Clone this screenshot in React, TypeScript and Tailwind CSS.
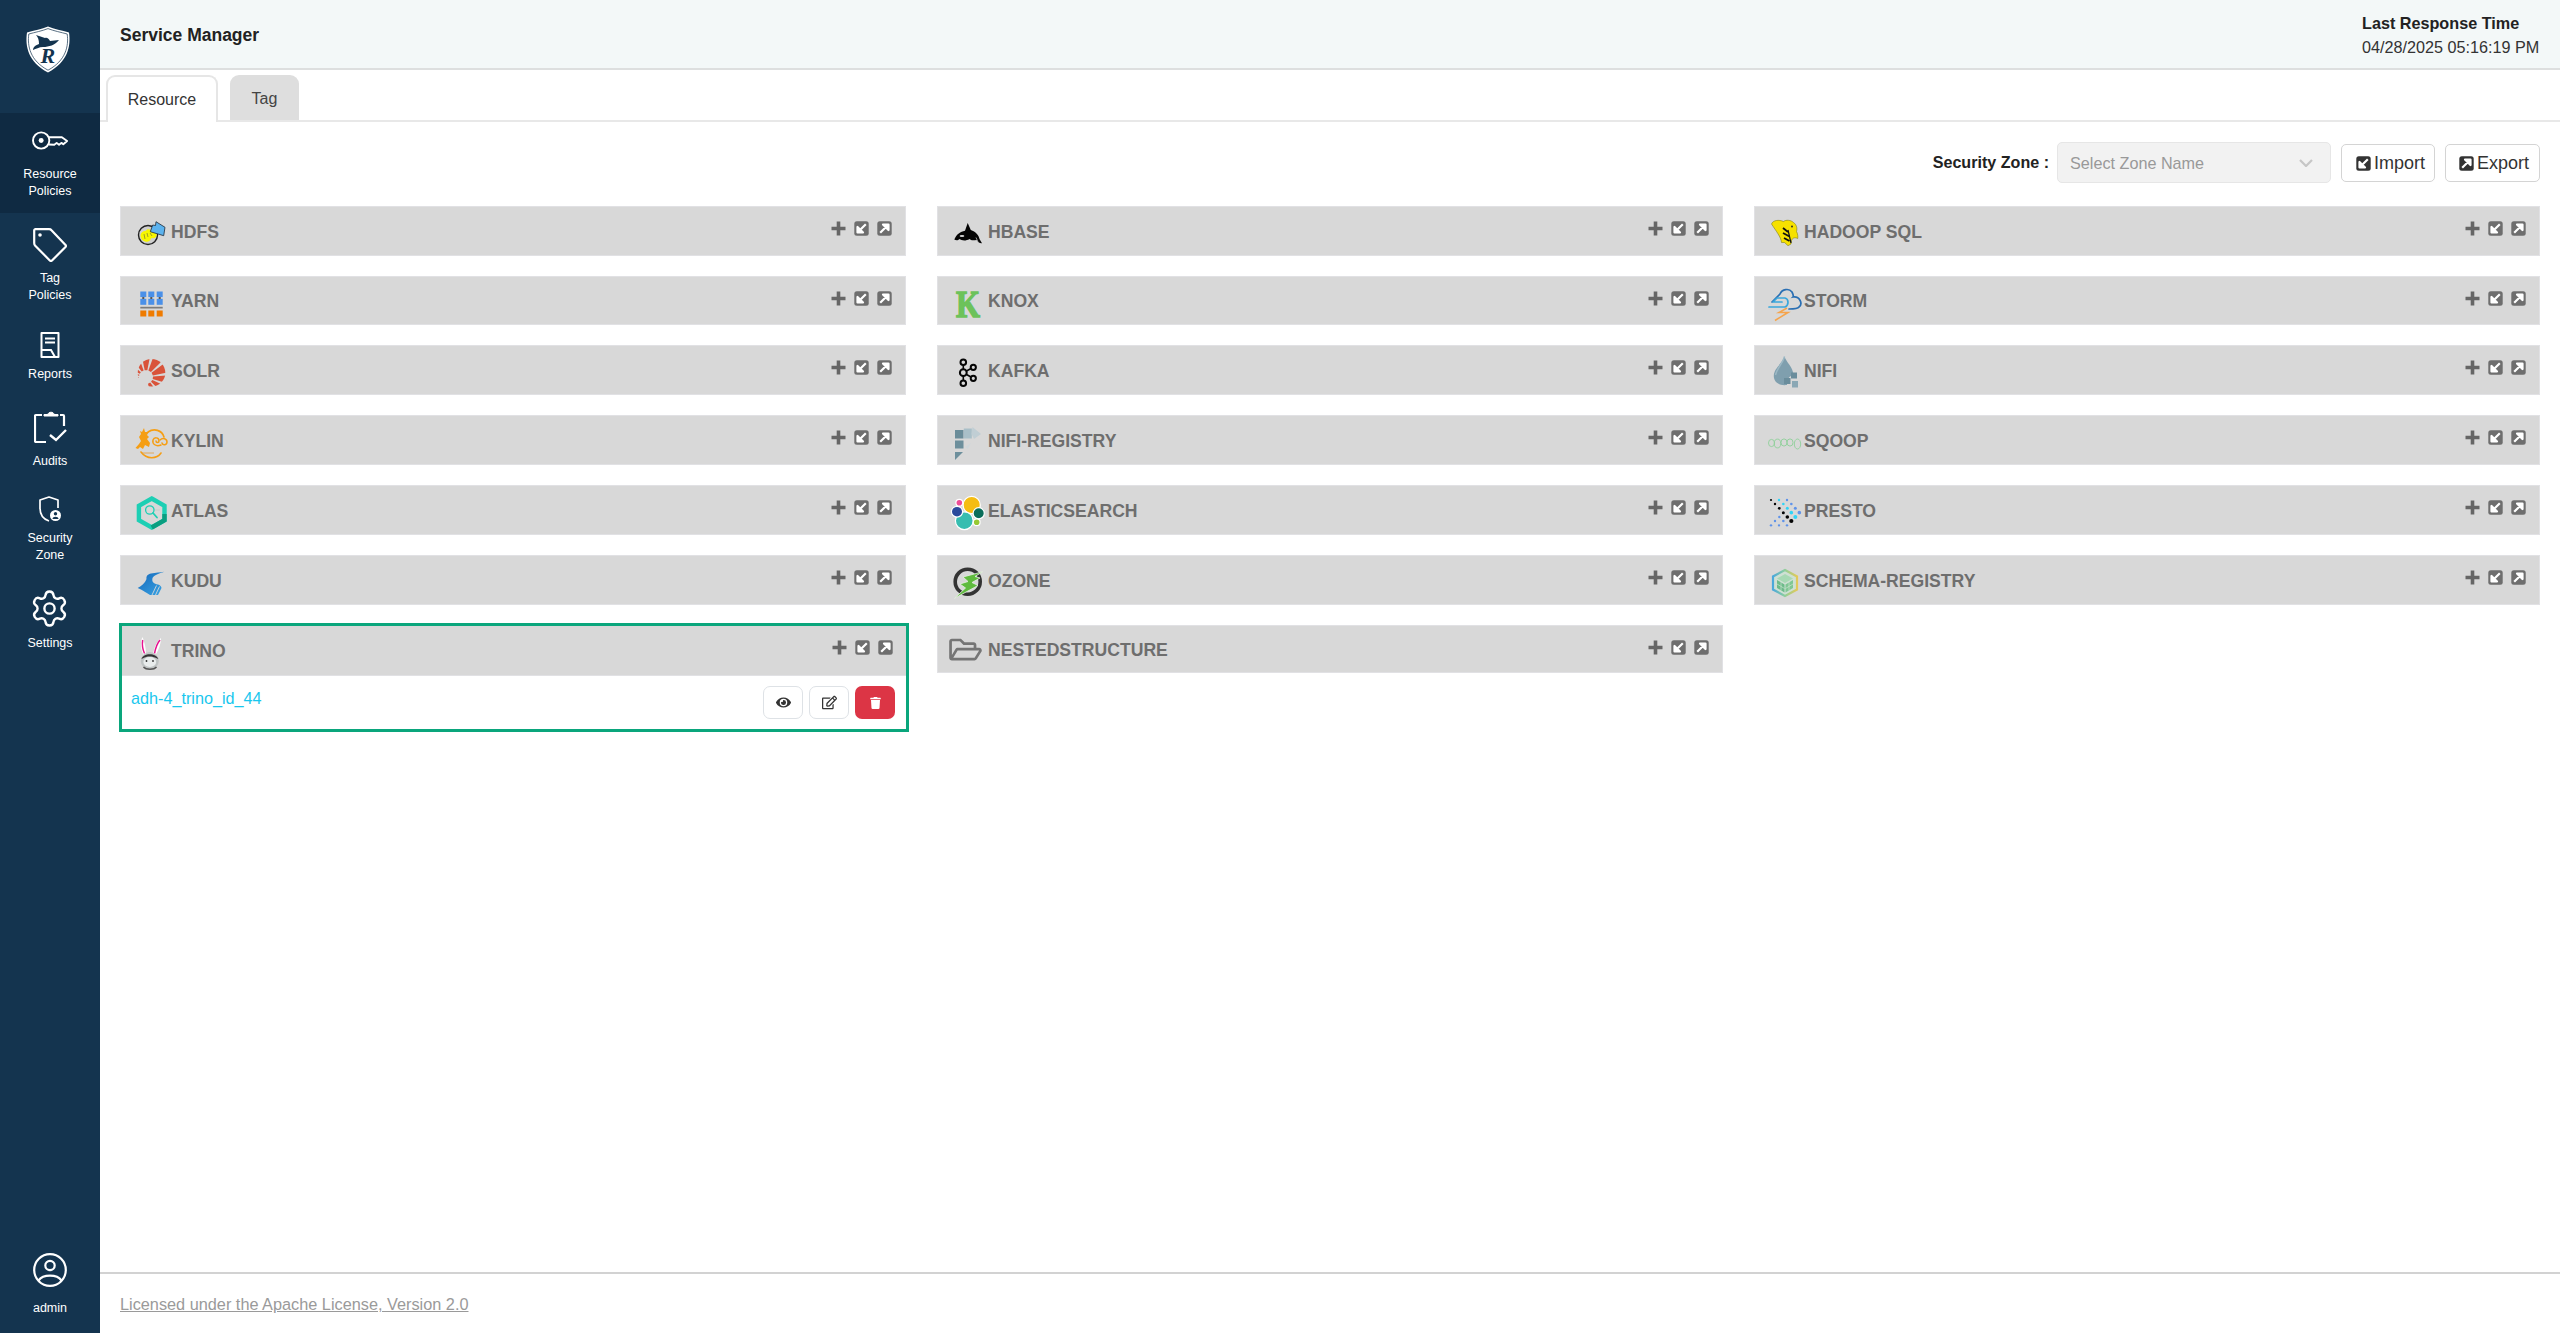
import React from "react";
import { Settings } from "lucide-react";
import { FaEye, FaRegEdit, FaTrash, FaRegFolderOpen } from "react-icons/fa";

const pol = (cx: number, cy: number, r: number, d: number) => {
  const a = (d * Math.PI) / 180;
  return `${(cx + r * Math.cos(a)).toFixed(2)},${(cy + r * Math.sin(a)).toFixed(2)}`;
};

function Box({ children }: { children: React.ReactNode }) {
  return (
    <svg viewBox="0 0 40 36" className="w-[40px] h-[36px] shrink-0 overflow-visible">
      {children}
    </svg>
  );
}

const HdfsIcon = () => (
  <Box>
    <circle cx="16" cy="22" r="9.5" fill="#cfcfcf" stroke="#222" strokeWidth="1.4" />
    <path d="M8.5 22 C9.5 17 14 19 15 16.5 C18 15.5 22 19 24.5 20 C25.5 25 21 26 19 25 C19 28 15 29.5 13 28.5 C10.5 27.5 8.5 26 8.5 22Z" fill="#f7f700" />
    <path d="M12 21 L13 26 M15 20 L16 24 M18 20 L20 23" stroke="#8a8a30" strokeWidth="0.8" />
    <path d="M18.3 18.7 L20.7 12 L23.5 12.5 L24 8.7 L33 14.3 L31.7 22.7Z" fill="#5cb3ee" stroke="#1f2a36" strokeWidth="0.8" strokeLinejoin="round" />
  </Box>
);

const YarnIcon = () => (
  <Box>
    {[8.3, 16.3, 24.7].map((x) => (
      <g key={x}>
        <rect x={x} y="8.5" width="6" height="5.6" fill="#4a90e8" />
        <rect x={x} y="15.8" width="6" height="6" fill="#4a90e8" />
        <rect x={x + 2} y="14" width="2" height="2" fill="#555" />
        <rect x={x} y="27.5" width="6" height="6" fill="#ef7b00" />
      </g>
    ))}
    <rect x="8.3" y="23.8" width="22.4" height="1.7" fill="#7c7c7c" />
  </Box>
);

const SolrIcon = () => {
  const rays: [number, number][] = [
    [174, 180], [190, 198], [208, 222], [232, 250], [259, 281], [290, 315], [323, 348], [356, 17], [25, 44], [53, 74],
  ];
  return (
    <Box>
      <defs>
        <clipPath id="solrclip">
          <circle cx="19.5" cy="20.8" r="13.8" />
        </clipPath>
      </defs>
      <g clipPath="url(#solrclip)" fill="#d9533a">
        {rays.map(([a, b]) => (
          <polygon key={a} points={`${pol(14, 25, 7, a)} ${pol(14, 25, 45, a)} ${pol(14, 25, 45, b)} ${pol(14, 25, 7, b)}`} />
        ))}
      </g>
    </Box>
  );
};

const KylinIcon = () => (
  <Box>
    <g fill="none" stroke="#f59e14" strokeWidth="1.6" strokeLinecap="round">
      <path d="M16 10 C22 6 30 8 32 15" />
      <path d="M9 30 C15 38 25 37 29 31" />
      <path d="M29 23 C24 25 20 22 21 18 C22 15 27 15 27 19 C27 21 24 21 24 19" strokeWidth="1.5" />
      <path d="M28 18 C31 15 35 17 35 20 C35 23 31 24 30 21" strokeWidth="1.5" />
    </g>
    <path d="M12 6 L13 10 L17 10 L15 13 L17 15 L15 17 L18 21 L17 25 L13 23 L11 27 L8 25 L6 27 L3.5 26 L7 22 L9 19 L7 15 L9 12 L8 9 L10 10Z" fill="#f59e14" />
    <path d="M10 31 L22 31" stroke="#e2a040" strokeWidth="0.8" />
  </Box>
);

const AtlasIcon = () => (
  <Box>
    <polygon points="19.7,6.5 32.5,13.8 32.5,28.2 19.7,35.5 6.9,28.2 6.9,13.8" fill="none" stroke="#1dcfb4" strokeWidth="4.4" strokeLinejoin="miter" />
    <polyline points="32.5,22 32.5,28.2 19.7,35.5" fill="none" stroke="#0a9e80" strokeWidth="4.4" />
    <circle cx="17.8" cy="18" r="4.2" fill="none" stroke="#1dcfb4" strokeWidth="1.3" />
    <path d="M21 21 L25 25.5" stroke="#1dcfb4" strokeWidth="1.8" strokeLinecap="round" />
    <path d="M23 18 H28" stroke="#c4cfcc" strokeWidth="0.9" />
  </Box>
);

const KuduIcon = () => (
  <Box>
    <defs>
      <linearGradient id="kudug" x1="0" x2="1" y1="0" y2="1">
        <stop offset="0" stopColor="#1466b8" />
        <stop offset="1" stopColor="#3ba6e6" />
      </linearGradient>
    </defs>
    <path d="M5.7 26 C9 24.5 13 21 14.5 17 C14 14 16 12 19 11.5 C24 10.5 28 10.3 32.3 9.7 C27 11.5 22 13 20.5 16 C19.5 20 22 22 26 22.5 C28 23 29.5 24.5 29.5 26 L26 33 L18 33 C15 31 12 29 5.7 26Z" fill="url(#kudug)" />
    <path d="M20 33 L24.5 23.5 M23.5 33 L27.5 24.5" stroke="#d8d8d8" strokeWidth="0.9" />
  </Box>
);

const TrinoIcon = () => (
  <Box>
    <path d="M12.5 4 C10 9 10.5 16 13.5 22 L16 21 C16 15 14.5 9 12.5 4Z" fill="#fff" />
    <path d="M12.7 7 C12 11 12.5 16 14.5 20.5" stroke="#e6128f" strokeWidth="1.5" fill="none" />
    <path d="M31 5 C27 8 24 15 23 21 L25.5 22 C29 16 31 11 31 5Z" fill="#fff" />
    <path d="M30 7 C27.5 10 25.5 15 24.5 20.5" stroke="#e6128f" strokeWidth="1.5" fill="none" />
    <circle cx="19.8" cy="28" r="9" fill="#bfc4c4" />
    <path d="M11.5 26 C13 19.5 26.5 19.5 28.3 26 L25 24.5 C22 23 17 23 14.5 24.5Z" fill="#333" />
    <path d="M13.5 34 C16 37 24 37 26.5 34" stroke="#555" strokeWidth="1.4" fill="none" />
    <ellipse cx="19.8" cy="29" rx="6.4" ry="5" fill="#e9eded" />
    <circle cx="16.5" cy="28" r="0.9" fill="#333" />
    <circle cx="23" cy="28" r="0.9" fill="#333" />
  </Box>
);

const OrcaIcon = () => (
  <Box>
    <path d="M5.3 26.5 C7.5 21 11.5 18.5 16 17.7 L18.7 10 L21.8 17 C26.5 18.5 30 22.5 30.5 26 L33 30.3 C30.5 30.5 28.6 28.8 27.6 27 C25 27 22.5 28 20.5 26 C17 28.2 12.5 27.7 10.5 26 C8.8 27.7 6.8 27.4 5.3 26.5Z" fill="#050505" />
    <ellipse cx="13" cy="23" rx="2.4" ry="0.9" fill="#d8d8d8" />
    <path d="M27 24.5 L29 29" stroke="#d8d8d8" strokeWidth="0.7" />
  </Box>
);

const KnoxIcon = () => (
  <Box>
    <text x="7" y="33.5" fontFamily="'Liberation Serif', serif" fontWeight="700" fontSize="37" fill="#6cc25a" stroke="#6cc25a" strokeWidth="1.4" textLength="24" lengthAdjust="spacingAndGlyphs">K</text>
  </Box>
);

const KafkaIcon = () => (
  <Box>
    <g fill="none" stroke="#050505" strokeWidth="2">
      <path d="M14.3 10.3 V31.3 M14.3 20.7 L24.3 15.3 M14.3 20.7 L24.3 26.3" strokeWidth="1.6" />
      <circle cx="14.3" cy="10.3" r="2.8" fill="#d8d8d8" />
      <circle cx="14.3" cy="20.7" r="3.4" fill="#d8d8d8" />
      <circle cx="14.3" cy="31.3" r="2.8" fill="#d8d8d8" />
      <circle cx="24.3" cy="15.3" r="2.6" fill="#d8d8d8" />
      <circle cx="24.3" cy="26.3" r="2.6" fill="#d8d8d8" />
    </g>
  </Box>
);

const NifiRegIcon = () => (
  <Box>
    <rect x="6" y="8" width="8.5" height="8.5" fill="#6a8c99" />
    <rect x="14.8" y="6.5" width="8" height="10" fill="#a9bfc8" />
    <polygon points="23.5,5 32,12 25,17 22.5,12" fill="#c0ced4" />
    <rect x="6" y="18.5" width="8.5" height="8" fill="#6d8f9c" />
    <polygon points="6,30 14,30 6,38" fill="#6d8f9c" />
    <polygon points="16,25 22,21 19,27" fill="#cfd7da" />
  </Box>
);

const ElasticIcon = () => (
  <Box>
    <g stroke="#fff" strokeWidth="1.2">
      <circle cx="22.7" cy="13" r="8.6" fill="#f5bd12" />
      <circle cx="15.3" cy="28.7" r="8.9" fill="#37bdb0" />
      <ellipse cx="29.7" cy="21.3" rx="5.6" ry="5.6" fill="#0b6e5a" />
      <ellipse cx="8" cy="19.7" rx="5.6" ry="5.4" fill="#2a4a9c" />
      <circle cx="10.3" cy="10.7" r="3.4" fill="#ee4d97" />
      <circle cx="27.7" cy="30.3" r="3.4" fill="#97c934" />
    </g>
  </Box>
);

const OzoneIcon = () => (
  <Box>
    <circle cx="18.7" cy="19.7" r="12.5" fill="none" stroke="#333" strokeWidth="3.6" />
    <polygon points="33.7,9.7 14,15 19,19.5 11,22 16.5,26 5.5,36.3 29,23.5 23,20.5 31,16 26,14.5" fill="#5fbb3e" stroke="#e6efe2" strokeWidth="0.8" />
  </Box>
);

const ElephantIcon = () => (
  <Box>
    <path d="M6.5 11 C8 7 14 6.5 18.5 8.5 C21 6.5 26 7 28.5 9.5 C31.5 11.5 32.5 15 31.5 18.5 C33 21 33 24 32.7 25.5 C29.5 24 27.5 25 26.5 27.5 L26 31 L23 32.7 L19.5 29.5 L16.5 29.5 C16 24 11 18 6.5 11Z" fill="#f6e100" stroke="#6a6a10" strokeWidth="0.5" />
    <path d="M18 15 L23 19 M18 20 L24.5 23.5 M19 25 L24.5 28" stroke="#111" strokeWidth="1.8" />
    <path d="M23 17 L26 30" stroke="#111" strokeWidth="1.2" />
    <circle cx="27" cy="13.5" r="0.9" fill="#222" />
  </Box>
);

const StormIcon = () => (
  <Box>
    <path d="M7 19 L15 11 C17 6 24 5 27 9 C29 13 28 14 28 14 C35 13 38 21 34 24 C33 25.5 30 26 24 26" fill="none" stroke="#2a6fb3" strokeWidth="1.7" strokeLinecap="round" />
    <path d="M4 24 L20 24 C24 22 24 16 20 15 L12 15 L8 19 L17 19" fill="none" stroke="#3aa6dc" strokeWidth="1.7" strokeLinecap="round" strokeLinejoin="round" />
    <path d="M22 25 L14 29.5 H23 L10 37.5" fill="none" stroke="#f5a44c" strokeWidth="1.6" strokeLinejoin="miter" />
  </Box>
);

const NifiIcon = () => (
  <Box>
    <path d="M19.5 4.5 C21 10 28 15 28.5 23 C24 24 22 27 22 33 C14 34 8.8 30 8.8 24 C8.8 16 17 12 19.5 4.5Z" fill="#7f9fae" />
    <path d="M19.5 4.5 C18 11 12 16 10.5 23" stroke="#9cb8c4" strokeWidth="1.5" fill="none" />
    <rect x="26" y="20.5" width="6" height="6" fill="#6a8d9c" />
    <rect x="19" y="26" width="6.5" height="6" fill="#6a8d9c" />
    <rect x="27" y="29" width="6" height="6.5" fill="#8ba8b5" />
  </Box>
);

const SqoopIcon = () => (
  <Box>
    <g fill="none" stroke="#8fd09a" strokeWidth="0.9">
      <ellipse cx="6.5" cy="21" rx="3" ry="3.6" />
      <ellipse cx="12.5" cy="21.5" rx="3.2" ry="4.4" />
      <ellipse cx="19" cy="20.5" rx="3" ry="3.6" />
      <ellipse cx="25" cy="20.5" rx="3" ry="3.6" />
      <ellipse cx="32.5" cy="22" rx="3.2" ry="5" />
    </g>
  </Box>
);

const PrestoIcon = () => {
  const black = [[60, 90, 1.1], [72, 102, 1.2], [85, 115, 1.4], [97, 128, 1.5], [109, 141, 1.8], [121, 153, 2.1]];
  const cyan = [[84, 90, 1.2], [97, 102, 1.3], [109, 115, 1.5], [121, 128, 1.8], [133, 141, 2]];
  const blue = [[108, 90, 1.2], [121, 102, 1.3], [133, 115, 1.5], [145, 128, 1.8], [97, 153, 1.3], [85, 141, 1.2], [72, 153, 1.2], [60, 166, 1.2], [84, 166, 1.2], [108, 166, 1.2]];
  const dot = (c: string) => (d: number[], i: number) => (
    <circle key={c + i} cx={d[0] / 3 - 14} cy={d[1] / 3 - 22} r={d[2]} fill={c} />
  );
  return (
    <Box>
      {blue.map(dot("#5f93ea"))}
      {cyan.map(dot("#2fd4f7"))}
      {black.map(dot("#050505"))}
    </Box>
  );
};

const SchemaIcon = () => (
  <Box>
    <defs>
      <linearGradient id="schg" x1="0" x2="1" y1="0" y2="0">
        <stop offset="0" stopColor="#4aa8dc" />
        <stop offset="0.5" stopColor="#8fcf9a" />
        <stop offset="1" stopColor="#e3c95a" />
      </linearGradient>
    </defs>
    <polygon points="20,8 32,14.5 32,27.5 20,34 8,27.5 8,14.5" fill="#cfe0d4" stroke="url(#schg)" strokeWidth="2.2" />
    <polygon points="20,12 28,16.5 20,21 12,16.5" fill="#a7d9b4" />
    <polygon points="12,18 19.5,22.5 19.5,30.5 12,26" fill="#6dbb8a" />
    <polygon points="28,18 20.5,22.5 20.5,30.5 28,26" fill="#7fc794" />
    <path d="M16 20 V28.5 M24 20 V28.5 M12 22 L19.5 26.5 M28 22 L20.5 26.5" stroke="#d8ead9" strokeWidth="0.6" />
  </Box>
);

const NestedIcon = () => (
  <div className="w-[40px] shrink-0">
    <FaRegFolderOpen className="text-[#757575] w-[33px] h-[29px]" />
  </div>
);

function SquareArrow({ dir, cls }: { dir: "in" | "out"; cls: string }) {
  return (
    <svg viewBox="0 0 15 15" className={cls}>
      <rect x="0.3" y="0.3" width="14.4" height="14.4" rx="2.5" fill="currentColor" />
      {dir === "in" ? (
        <path d="M11.8 3.2 L6.5 8.5 M3.5 6 V11.5 H9 L3.5 6Z" stroke="#fff" strokeWidth="2.2" fill="#fff" strokeLinejoin="round" />
      ) : (
        <path d="M3.2 11.8 L8.5 6.5 M11.5 9 V3.5 H6 L11.5 9Z" stroke="#fff" strokeWidth="2.2" fill="#fff" strokeLinejoin="round" />
      )}
    </svg>
  );
}

function CardActions() {
  return (
    <div className="ml-auto self-start pt-[14px] pr-[13px] flex items-center gap-[8px] text-[#6e6e6e]">
      <svg viewBox="0 0 15 15" className="w-[15px] h-[15px]">
        <path d="M5.7 0.5 H9.3 V5.7 H14.5 V9.3 H9.3 V14.5 H5.7 V9.3 H0.5 V5.7 H5.7Z" fill="#666" />
      </svg>
      <SquareArrow dir="in" cls="w-[15px] h-[15px]" />
      <SquareArrow dir="out" cls="w-[15px] h-[15px]" />
    </div>
  );
}

function Title({ children }: { children: React.ReactNode }) {
  return <span className="text-[17.6px] font-bold text-[#6e6e6e] leading-none -ml-[1px] pt-[3px]">{children}</span>;
}

function Card({ name, icon, h, col3 }: { name: string; icon: React.ReactNode; h: string; col3?: boolean }) {
  return (
    <div className={`${h} ${col3 ? "pl-[10px]" : "pl-[11px]"} bg-[#d8d8d8] border border-[#e1e1e4] flex items-center`}>
      {icon}
      <Title>{name}</Title>
      <CardActions />
    </div>
  );
}

const H50 = "h-[50px]";
const H49 = "h-[49px]";

const col1: [string, React.ReactNode, string][] = [
  ["HDFS", <HdfsIcon />, H50],
  ["YARN", <YarnIcon />, H49],
  ["SOLR", <SolrIcon />, H50],
  ["KYLIN", <KylinIcon />, H50],
  ["ATLAS", <AtlasIcon />, H50],
  ["KUDU", <KuduIcon />, H50],
];
const col2: [string, React.ReactNode, string][] = [
  ["HBASE", <OrcaIcon />, H50],
  ["KNOX", <KnoxIcon />, H49],
  ["KAFKA", <KafkaIcon />, H50],
  ["NIFI-REGISTRY", <NifiRegIcon />, H50],
  ["ELASTICSEARCH", <ElasticIcon />, H50],
  ["OZONE", <OzoneIcon />, H50],
  ["NESTEDSTRUCTURE", <NestedIcon />, "h-[48px]"],
];
const col3: [string, React.ReactNode, string][] = [
  ["HADOOP SQL", <ElephantIcon />, H50],
  ["STORM", <StormIcon />, H49],
  ["NIFI", <NifiIcon />, H50],
  ["SQOOP", <SqoopIcon />, H50],
  ["PRESTO", <PrestoIcon />, H50],
  ["SCHEMA-REGISTRY", <SchemaIcon />, H50],
];

function Logo() {
  return (
    <svg viewBox="0 0 46 47" className="w-[46px] h-[47px]">
      <path d="M23 0.5 C29 3 37 4.5 44 6.5 C46 20 43 36 23 46.5 C3 36 0 20 2 6.5 C9 4.5 17 3 23 0.5Z" fill="#fff" />
      <path d="M23 2.6 C29 5 36 6.3 42.2 8 C43.8 20 41 34.5 23 44.2 C5 34.5 2.2 20 3.8 8 C10 6.3 17 5 23 2.6Z" fill="none" stroke="#14344f" strokeWidth="0.7" />
      <path d="M11 9 L20 12 C22 11 24 13 25 15 C28 15 31 14 34 14 C30 19 24 21 18 21 C14 21 11 23 8 24 C8 21 11 19 14 18 C14 14 13 11 11 9Z" fill="#14344f" />
      <text x="15.5" y="37" fontFamily="'Liberation Serif', serif" fontStyle="italic" fontWeight="700" fontSize="22" fill="#14344f">R</text>
    </svg>
  );
}

const KeyIcon = () => (
  <svg viewBox="0 0 38 20" className="w-[38px] h-[19px]" fill="none" stroke="#fff" strokeWidth="2" strokeLinejoin="round">
    <circle cx="9.7" cy="10" r="8.6" />
    <circle cx="9.7" cy="10" r="2.6" fill="#fff" stroke="none" />
    <path d="M18 6.5 H31.5 L37 10.5 L33 14 L31 12.5 L28.5 14.5 L26 12.5 L23.5 14.5 L18 14.2" />
  </svg>
);

const TagIcon = () => (
  <svg viewBox="0 0 34 34" className="w-[34px] h-[34px]" fill="none" stroke="#fff" strokeWidth="2.2" strokeLinejoin="round">
    <path d="M2.5 1.2 H16 C17 1.2 18 1.6 18.5 2.2 L32.5 17 C33 17.6 33 18.4 32.5 19 L19 32.5 C18.4 33 17.4 33 16.8 32.5 L2 17.4 C1.4 16.8 1.2 16 1.2 15 V2.5 C1.2 1.8 1.8 1.2 2.5 1.2Z" />
    <circle cx="7" cy="7" r="1.8" fill="#fff" stroke="none" />
  </svg>
);

const ReportIcon = () => (
  <svg viewBox="0 0 20 26" className="w-[20px] h-[26px]" fill="none" stroke="#fff" strokeWidth="2">
    <path d="M1.5 1 H18.5 V25 H1.5Z" strokeLinejoin="round" />
    <path d="M5 6.5 H15 M5 10.5 H15" />
    <path d="M1.5 18 H11 L15 25" />
  </svg>
);

const AuditIcon = () => (
  <svg viewBox="0 0 33 33" className="w-[33px] h-[33px]" fill="none" stroke="#fff" strokeWidth="2.2">
    <path d="M8 5 H2 C1.4 5 1 5.5 1 6 V31 C1 31.5 1.4 32 2 32 H12" />
    <path d="M26 5 H29 C29.6 5 30 5.5 30 6 V16" />
    <path d="M10 6 H24 V4.5 H20 C20 1.5 14 1.5 14 4.5 H10Z" fill="#fff" strokeWidth="1" />
    <path d="M16 25 L22 30 L32 20" strokeWidth="2.4" />
  </svg>
);

const ShieldIcon = () => (
  <svg viewBox="0 0 22 26" className="w-[22px] h-[26px]" fill="none" stroke="#fff" strokeWidth="1.7">
    <path d="M10 25 C4 23 1 18 1 12 V4 L10 1 L19 4 V12" strokeLinejoin="round" />
    <circle cx="16.5" cy="19.5" r="5.5" fill="#fff" stroke="none" />
    <circle cx="16.5" cy="17.8" r="1.7" fill="#14344f" stroke="none" />
    <path d="M13.5 23 C13.5 20 19.5 20 19.5 23Z" fill="#14344f" stroke="none" />
  </svg>
);

const UserIcon = () => (
  <svg viewBox="0 0 34 34" className="w-[34px] h-[34px]" fill="none" stroke="#fff" strokeWidth="2.2">
    <circle cx="17" cy="17" r="15.8" />
    <circle cx="17" cy="12.5" r="4.7" />
    <path d="M5.5 27.5 C10 21 24 21 28.5 27.5" />
  </svg>
);

function NavLabel({ children }: { children: React.ReactNode }) {
  return <div className="text-[12.5px] leading-[17px] text-white text-center">{children}</div>;
}

function Sidebar() {
  return (
    <aside className="w-[100px] shrink-0 bg-[#14344f] flex flex-col items-center">
      <div className="h-[113px] w-full pt-[26px] pr-[4px] flex justify-center">
        <Logo />
      </div>
      <div className="w-full h-[100px] bg-[#0f2a42] pt-[18px] flex flex-col items-center">
        <KeyIcon />
        <div className="mt-[16px]">
          <NavLabel>Resource<br />Policies</NavLabel>
        </div>
      </div>
      <div className="pt-[15px] flex flex-col items-center">
        <TagIcon />
        <div className="mt-[8px]">
          <NavLabel>Tag<br />Policies</NavLabel>
        </div>
      </div>
      <div className="pt-[28px] flex flex-col items-center">
        <ReportIcon />
        <div className="mt-[8px]">
          <NavLabel>Reports</NavLabel>
        </div>
      </div>
      <div className="pt-[27px] flex flex-col items-center">
        <AuditIcon />
        <div className="mt-[10px]">
          <NavLabel>Audits</NavLabel>
        </div>
      </div>
      <div className="pt-[26px] flex flex-col items-center">
        <ShieldIcon />
        <div className="mt-[8px]">
          <NavLabel>Security<br />Zone</NavLabel>
        </div>
      </div>
      <div className="pt-[24px] flex flex-col items-center">
        <Settings className="w-[41px] h-[41px] text-white" strokeWidth={1.4} />
        <div className="mt-[6px]">
          <NavLabel>Settings</NavLabel>
        </div>
      </div>
      <div className="mt-auto pb-[16px] flex flex-col items-center">
        <UserIcon />
        <div className="mt-[13px]">
          <NavLabel>admin</NavLabel>
        </div>
      </div>
    </aside>
  );
}

function TrinoCard() {
  return (
    <div className="-mt-[2px] -ml-[1px] -mr-[3px] border-[3px] border-[#0aa67c] bg-white">
      <div className="h-[50px] pl-[8px] pr-0 bg-[#d8d8d8] border-b border-[#e1e1e4] flex items-center">
        <TrinoIcon />
        <span className="ml-[2px] flex">
          <Title>TRINO</Title>
        </span>
        <CardActions />
      </div>
      <div className="h-[53px] pl-[9px] pr-[11px] pt-[10px] flex items-start justify-between">
        <a className="text-[16.2px] leading-[24px] text-[#19c7ee]">adh-4_trino_id_44</a>
        <div className="flex gap-[6px]">
          <button className="w-[40px] h-[33px] rounded-[7px] border border-[#dee2e6] bg-white flex items-center justify-center text-[#333]">
            <FaEye className="w-[15px] h-[15px]" />
          </button>
          <button className="w-[40px] h-[33px] rounded-[7px] border border-[#dee2e6] bg-white flex items-center justify-center text-[#333]">
            <FaRegEdit className="w-[15px] h-[15px]" />
          </button>
          <button className="w-[40px] h-[33px] rounded-[7px] bg-[#dc3545] flex items-center justify-center text-white">
            <FaTrash className="w-[11px] h-[12px]" />
          </button>
        </div>
      </div>
    </div>
  );
}

export default function App() {
  return (
    <div className="h-screen w-full flex font-['Liberation_Sans',Arial,sans-serif] bg-white overflow-hidden">
      <Sidebar />
      <main className="flex-1 flex flex-col min-w-0">
        <header className="h-[70px] bg-[#f3f8f8] border-b-2 border-[#dddfdf] pl-[20px] pr-[20px] flex items-center justify-between">
          <div className="text-[17.5px] font-bold text-[#222] pt-[2px]">Service Manager</div>
          <div className="w-[178px] pt-[1px]">
            <div className="text-[16.2px] leading-[24px] font-bold text-[#222]">Last Response Time</div>
            <div className="text-[16.2px] leading-[24px] text-[#333]">04/28/2025 05:16:19 PM</div>
          </div>
        </header>
        <div className="h-[52px] pt-[6px] pl-[6px] flex items-end gap-[12px] border-b-2 border-[#e8e8e8]">
          <div className="h-[47px] -mb-[2px] w-[112px] border-2 border-b-0 border-[#e6e6e6] rounded-t-[9px] bg-white flex items-center justify-center text-[16px] text-[#333]">
            Resource
          </div>
          <div className="h-[45px] w-[69px] pt-[3px] rounded-t-[9px] bg-[#dedede] flex items-center justify-center text-[16px] text-[#444]">
            Tag
          </div>
        </div>
        <div className="pt-[20px] pb-[23px] pr-[20px] flex justify-end items-center">
          <span className="text-[16.1px] font-bold text-[#222]">Security Zone :</span>
          <div className="ml-[8px] w-[274px] h-[41px] pt-[1px] bg-[#f2f2f2] border border-[#e6e6e6] rounded-[5px] pl-[12px] pr-[17px] flex items-center justify-between text-[16.2px] text-[#999]">
            <span>Select Zone Name</span>
            <svg viewBox="0 0 14 8" className="w-[14px] h-[8px]" fill="none" stroke="#c6c6c6" strokeWidth="2.2">
              <path d="M1 1 L7 7 L13 1" />
            </svg>
          </div>
          <button className="ml-[10px] h-[38px] w-[94px] pt-[1px] border border-[#d4d4d4] rounded-[5px] bg-white pl-[14px] flex items-center gap-[3px] text-[18px] text-[#333]">
            <SquareArrow dir="in" cls="w-[15px] h-[15px]" />
            Import
          </button>
          <button className="ml-[10px] h-[38px] w-[95px] pt-[1px] border border-[#d4d4d4] rounded-[5px] bg-white pl-[13px] flex items-center gap-[3px] text-[18px] text-[#333]">
            <SquareArrow dir="out" cls="w-[15px] h-[15px]" />
            Export
          </button>
        </div>
        <div className="px-[20px] grid grid-cols-3 gap-x-[31px] items-start">
          <div className="flex flex-col gap-[20px]">
            {col1.map(([n, i, h]) => (
              <Card key={n} name={n} icon={i} h={h} />
            ))}
            <TrinoCard />
          </div>
          <div className="flex flex-col gap-[20px]">
            {col2.map(([n, i, h]) => (
              <Card key={n} name={n} icon={i} h={h} />
            ))}
          </div>
          <div className="flex flex-col gap-[20px]">
            {col3.map(([n, i, h]) => (
              <Card key={n} name={n} icon={i} h={h} col3 />
            ))}
          </div>
        </div>
        <footer className="mt-auto h-[61px] border-t-2 border-[#d2d2d2] pl-[20px] pt-[18px]">
          <a className="text-[16.3px] leading-[24px] text-[#9a9a9a] underline">Licensed under the Apache License, Version 2.0</a>
        </footer>
      </main>
    </div>
  );
}
